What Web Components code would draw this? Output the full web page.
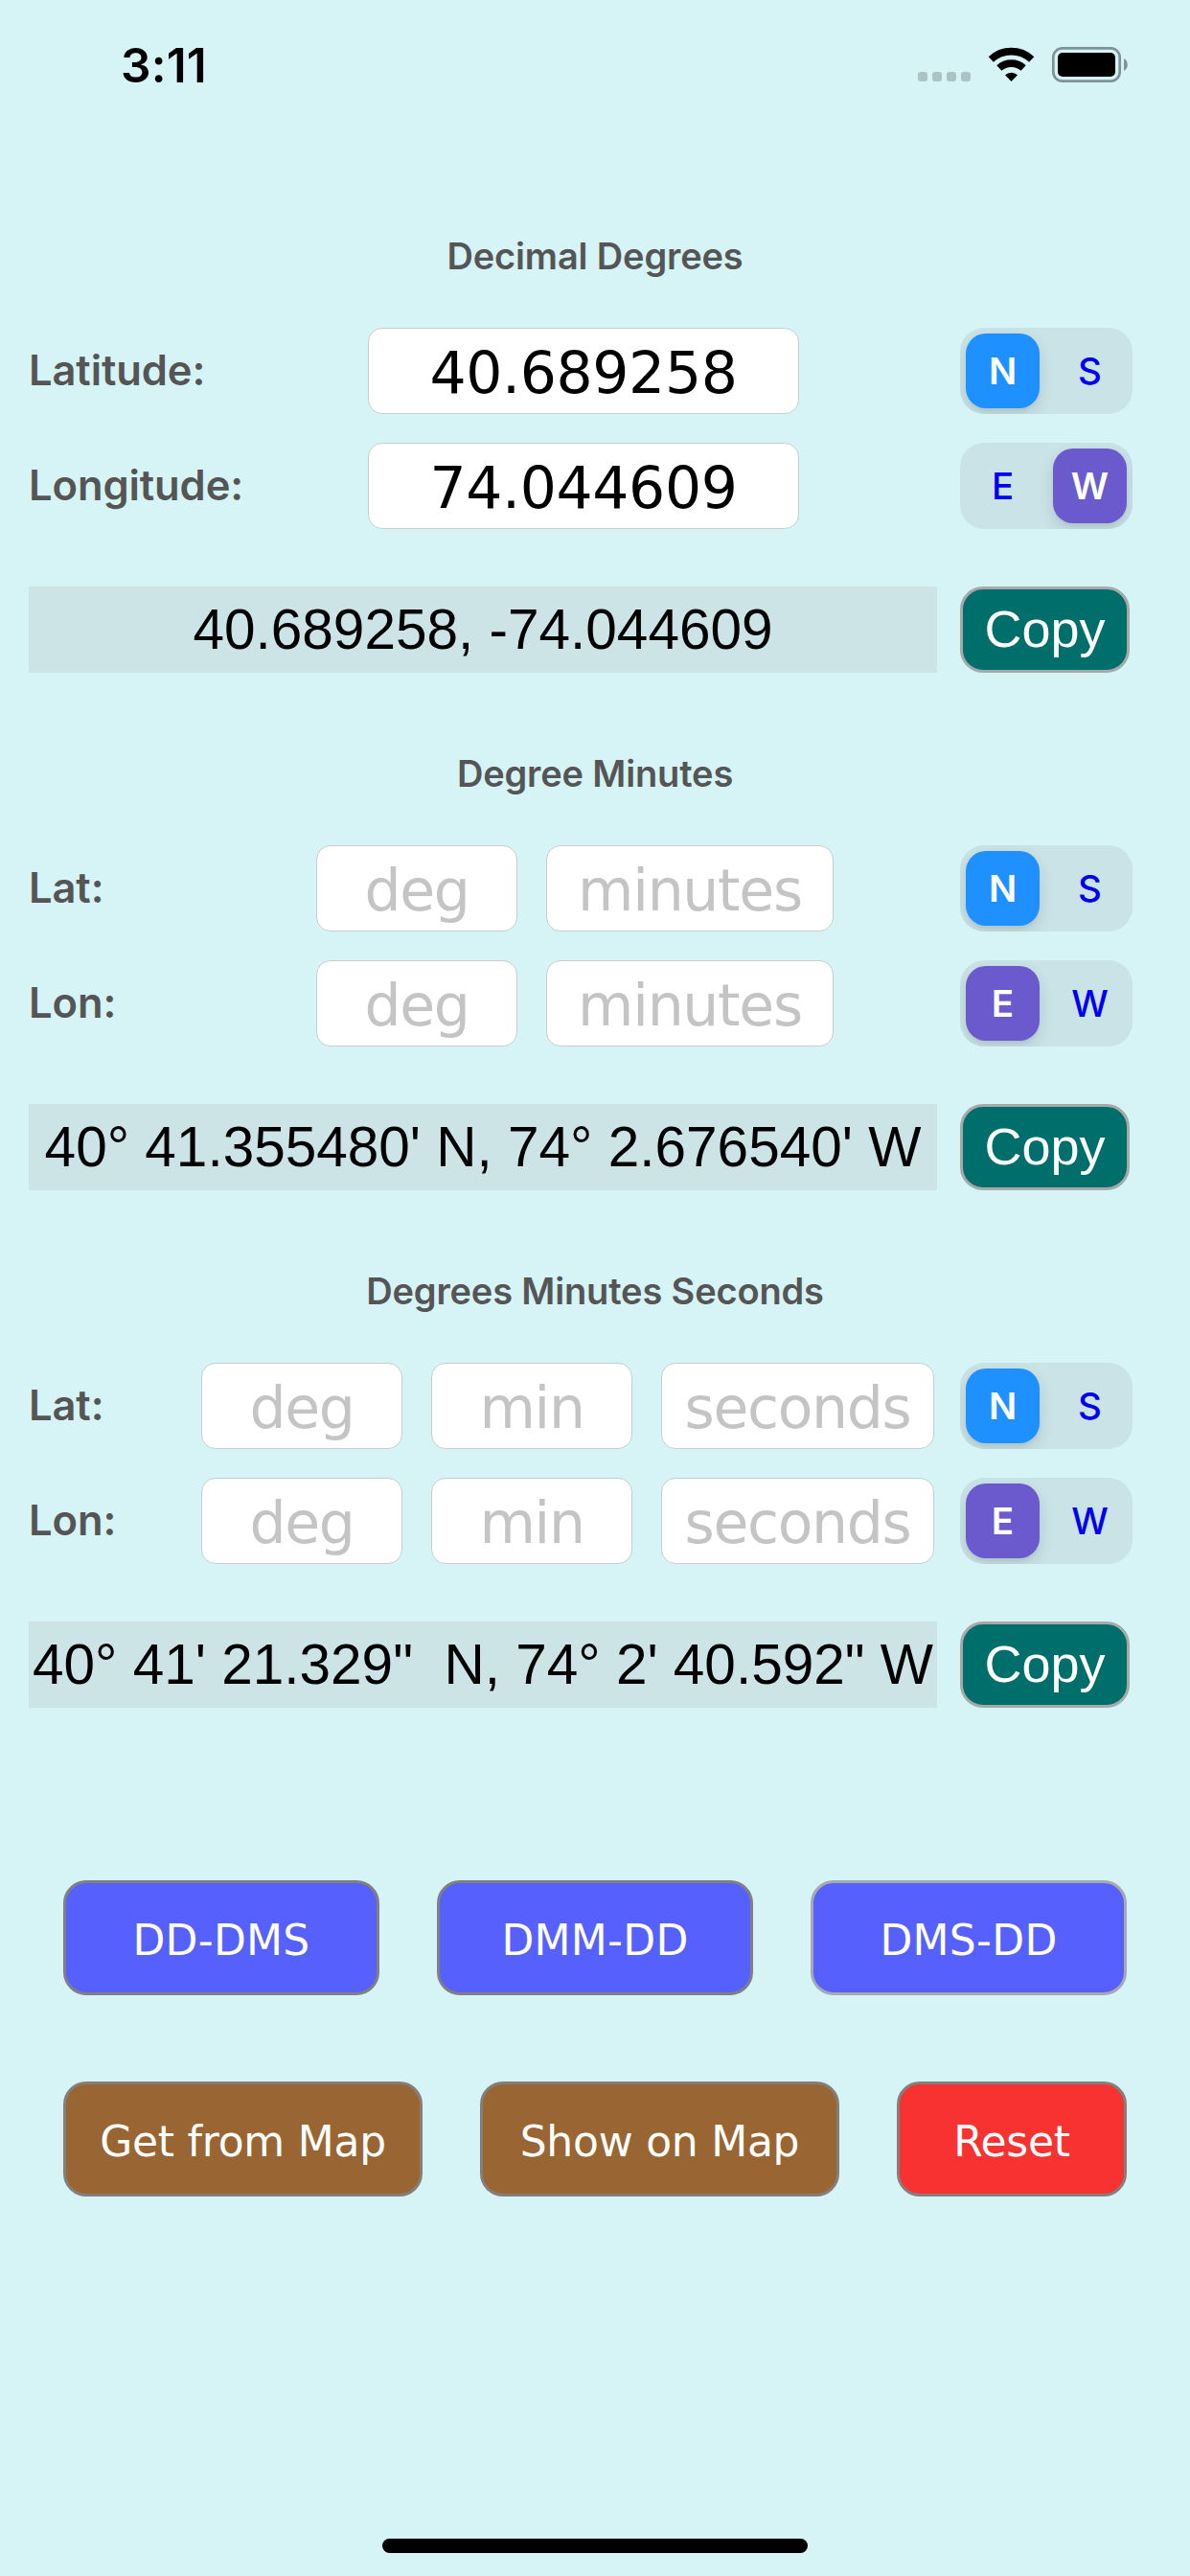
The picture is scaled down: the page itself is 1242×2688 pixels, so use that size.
<!DOCTYPE html>
<html lang="en">
<head>
<meta charset="utf-8">
<title>Coordinates</title>
<style>
    body {
        margin: 0;
        background-color: #d6f4f6;
    }
</style>
</head>
<body>
<coord-app></coord-app>

<script>
const define = (name, html) => {
    const template = document.createElement('template')
    template.innerHTML = html

    customElements.define(name,
        class extends HTMLElement {

            constructor() {
                super()
                this.attachShadow({ mode: 'open' })
                    .appendChild(template.content.cloneNode(true))
            }
        })
}

define('status-bar', `
    <style>
        :host {
            display: flex;
            justify-content: space-between;
            align-items: flex-start;
            box-sizing: border-box;
            height: 132px;
            padding: 38px 64px 0 126px;
            font: 600 49.5px/60px Inter, sans-serif;
            letter-spacing: 0.2px;
            color: black;
        }

        svg {
            display: block;
            margin-top: 7px;
        }
    </style>
    <span class="time"><slot></slot></span>
    <svg width="222" height="46" viewBox="956 45 222 46">
        <g fill="#abc3c5">
            <rect x="958" y="75" width="10" height="10" rx="3"/>
            <rect x="973" y="75" width="10" height="10" rx="3"/>
            <rect x="988" y="75" width="10" height="10" rx="3"/>
            <rect x="1003" y="75" width="10" height="10" rx="3"/>
        </g>
        <g fill="none" stroke="black" stroke-width="7.6">
            <path d="M1034.3 62 A31 31 0 0 1 1076.7 62"/>
            <path d="M1042.8 71 A19 19 0 0 1 1068.2 71"/>
        </g>
        <path d="M1055.5 85 L1049 78.3 A9.5 9.5 0 0 1 1062 78.3 Z"/>
        <rect x="1099.3" y="50.3" width="69.4" height="34.4" rx="9.5" fill="none" stroke="#7f9395" stroke-width="2.7"/>
        <rect x="1104" y="55" width="60" height="25" rx="5"/>
        <path d="M1173 61 A7.5 7.5 0 0 1 1173 74 Z" fill="#7f9395"/>
    </svg>
`)

define('coord-section', `
    <style>
        :host {
            display: flex;
            flex-direction: column;
            padding: 0 60px 0 30px;
        }

        h2 {
            margin: 0 -30px 46px 0;
            text-align: center;
            font: 600 38px/58px Inter, sans-serif;
            letter-spacing: -0.15px;
            color: #555;
        }

        .rows {
            display: flex;
            flex-direction: column;
            gap: 30px;
        }

        .result {
            display: flex;
            gap: 24px;
            margin-top: 60px;
        }
    </style>
    <h2><slot name="title"></slot></h2>
    <div class="rows"><slot></slot></div>
    <div class="result"><slot name="result"></slot></div>
`)

define('coord-row', `
    <style>
        :host {
            display: flex;
            height: 90px;
        }

        .label {
            width: var(--label-width);
            font: 600 43.5px/88px Inter, sans-serif;
            letter-spacing: -0.1px;
            color: #555;
        }

        .fields {
            display: flex;
            gap: 30px;
            flex: 1;
        }
    </style>
    <div class="label"><slot name="label"></slot></div>
    <div class="fields"><slot></slot></div>
    <slot name="toggle"></slot>
`)

define('coord-field', `
    <style>
        :host {
            display: block;
            box-sizing: border-box;
            width: 210px;
            height: 90px;
            border: 1px solid #c8cccd;
            border-radius: 15px;
            background-color: white;
            text-align: center;
            font: 60px/93px "DejaVu Sans", sans-serif;
            letter-spacing: -1.3px;
            color: #c4c4c6;
        }

        :host([filled]) {
            letter-spacing: -0.4px;
            color: black;
        }
    </style>
    <slot></slot>
`)

define('coord-toggle', `
    <style>
        :host {
            display: flex;
            justify-content: space-between;
            box-sizing: border-box;
            width: 180px;
            height: 90px;
            padding: 6px;
            border-radius: 25px;
            background-color: #cae3e6;
            overflow: hidden;
            text-align: center;
            font: 450 38.5px/78px Inter, sans-serif;
            color: #0000f0;
        }

        ::slotted(*) {
            width: 77px;
            border-radius: 21px;
        }

        ::slotted([selected]) {
            background-color: var(--accent);
            box-shadow: 0 6px 16px rgba(0, 0, 0, 0.12), 0 3px 3px rgba(0, 0, 0, 0.04);
            font-weight: 570;
            color: white;
        }
    </style>
    <slot></slot>
`)

define('coord-output', `
    <style>
        :host {
            display: block;
            width: 948px;
            height: 90px;
            background-color: #cce4e6;
            text-align: center;
            white-space: nowrap;
            font: 58.5px/90px "Liberation Sans", sans-serif;
            color: black;
        }
    </style>
    <slot></slot>
`)

define('coord-button', `
    <style>
        :host {
            display: block;
            box-sizing: border-box;
            width: 330px;
            height: 120px;
            border: 3px solid #808084;
            border-radius: 24px;
            background-color: #5661fd;
            text-align: center;
            font: 44px/120px "DejaVu Sans", sans-serif;
            letter-spacing: 0.3px;
            color: white;
        }

        :host([light]) {
            border-color: #a6a9b0;
        }

        :host([kind="map"]) {
            width: 375px;
            border-color: #857e78;
            background-color: #996633;
            letter-spacing: -0.25px;
        }

        :host([kind="reset"]) {
            width: 240px;
            border-color: #857e7c;
            background-color: #f83131;
            letter-spacing: -0.25px;
        }

        :host([kind="copy"]) {
            width: 177px;
            height: 90px;
            border-color: #a5a9aa;
            background-color: #006f6b;
            font: 54px/83px "Liberation Sans", sans-serif;
            letter-spacing: 0;
        }
    </style>
    <slot></slot>
`)

define('coord-app', `
    <style>
        :host {
            display: flex;
            flex-direction: column;
            width: 1242px;
            height: 2688px;
        }

        main {
            display: flex;
            flex-direction: column;
            gap: 76px;
            padding-top: 106px;
        }

        .dd { --label-width: 354px; }
        .dd coord-field { width: 450px; }
        .dmm { --label-width: 300px; }
        .dmm .minutes { width: 300px; }
        .dms { --label-width: 180px; }
        .dms .seconds { width: 285px; }

        .lat { --accent: #1e90ff; }
        .lon { --accent: #6a5acd; }

        nav {
            display: flex;
            flex-direction: column;
            gap: 90px;
            padding: 180px 66px 0;
        }

        nav div {
            display: flex;
            justify-content: space-between;
        }

        .home {
            width: 444px;
            height: 15px;
            margin: auto auto 24px;
            border-radius: 8px;
            background-color: black;
        }
    </style>
    <status-bar>3:11</status-bar>
    <main>
        <coord-section class="dd">
            <span slot="title">Decimal Degrees</span>
            <coord-row>
                <span slot="label">Latitude:</span>
                <coord-field filled>40.689258</coord-field>
                <coord-toggle slot="toggle" class="lat"><span selected>N</span><span>S</span></coord-toggle>
            </coord-row>
            <coord-row>
                <span slot="label">Longitude:</span>
                <coord-field filled>74.044609</coord-field>
                <coord-toggle slot="toggle" class="lon"><span>E</span><span selected>W</span></coord-toggle>
            </coord-row>
            <coord-output slot="result">40.689258, -74.044609</coord-output>
            <coord-button slot="result" kind="copy">Copy</coord-button>
        </coord-section>
        <coord-section class="dmm">
            <span slot="title">Degree Minutes</span>
            <coord-row>
                <span slot="label">Lat:</span>
                <coord-field>deg</coord-field>
                <coord-field class="minutes">minutes</coord-field>
                <coord-toggle slot="toggle" class="lat"><span selected>N</span><span>S</span></coord-toggle>
            </coord-row>
            <coord-row>
                <span slot="label">Lon:</span>
                <coord-field>deg</coord-field>
                <coord-field class="minutes">minutes</coord-field>
                <coord-toggle slot="toggle" class="lon"><span selected>E</span><span>W</span></coord-toggle>
            </coord-row>
            <coord-output slot="result">40° 41.355480' N, 74° 2.676540' W</coord-output>
            <coord-button slot="result" kind="copy">Copy</coord-button>
        </coord-section>
        <coord-section class="dms">
            <span slot="title">Degrees Minutes Seconds</span>
            <coord-row>
                <span slot="label">Lat:</span>
                <coord-field>deg</coord-field>
                <coord-field>min</coord-field>
                <coord-field class="seconds">seconds</coord-field>
                <coord-toggle slot="toggle" class="lat"><span selected>N</span><span>S</span></coord-toggle>
            </coord-row>
            <coord-row>
                <span slot="label">Lon:</span>
                <coord-field>deg</coord-field>
                <coord-field>min</coord-field>
                <coord-field class="seconds">seconds</coord-field>
                <coord-toggle slot="toggle" class="lon"><span selected>E</span><span>W</span></coord-toggle>
            </coord-row>
            <coord-output slot="result">40° 41' 21.329"&nbsp; N, 74° 2' 40.592" W</coord-output>
            <coord-button slot="result" kind="copy">Copy</coord-button>
        </coord-section>
    </main>
    <nav>
        <div>
            <coord-button>DD-DMS</coord-button>
            <coord-button>DMM-DD</coord-button>
            <coord-button light>DMS-DD</coord-button>
        </div>
        <div>
            <coord-button kind="map">Get from Map</coord-button>
            <coord-button kind="map">Show on Map</coord-button>
            <coord-button kind="reset">Reset</coord-button>
        </div>
    </nav>
    <div class="home"></div>
`)
</script>
</body>
</html>
